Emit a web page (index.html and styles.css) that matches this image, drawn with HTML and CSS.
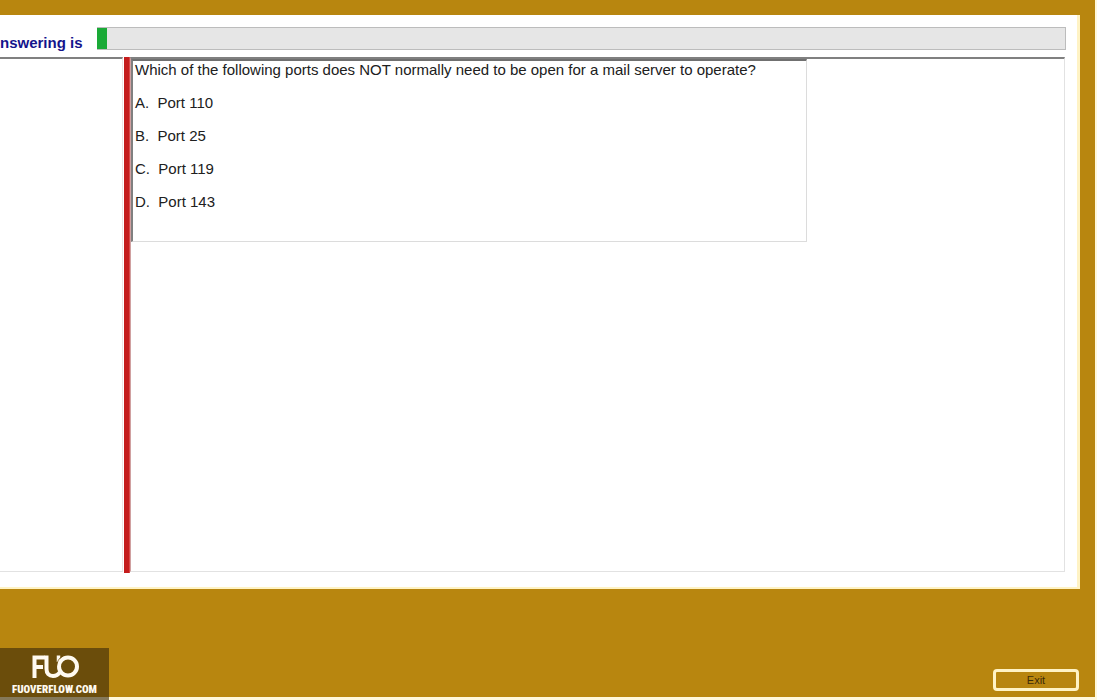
FILE: index.html
```html
<!DOCTYPE html>
<html lang="en">

<head>
    <meta charset="UTF-8">
    <meta name="viewport" content="width=device-width, initial-scale=1.0">
    <title>Practice Exam</title>
    <link rel="stylesheet" href="styles.css">
</head>

<body>
    <div class="window">
        <main class="exam">
            <div class="status">
                <label class="status-label" for="progress">nswering is</label>
                <progress class="progress" id="progress" value="1" max="100"></progress>
            </div>
            <div class="panes">
                <div class="side"></div>
                <div class="divider"></div>
                <div class="content">
                    <section class="question">
                        <p>Which of the following ports does NOT normally need to be open for a mail server to operate?</p>
                        <p>A.&nbsp; Port 110</p>
                        <p>B.&nbsp; Port 25</p>
                        <p>C.&nbsp; Port 119</p>
                        <p>D.&nbsp; Port 143</p>
                    </section>
                </div>
            </div>
        </main>
        <footer class="footer">
            <button type="button" class="exit">Exit</button>
        </footer>
    </div>

    <div class="watermark">
        <svg class="logo" width="48" height="24" viewBox="0 0 48 24" fill="none" stroke="#fffaf0" stroke-width="4">
            <path d="M3.500 23V2.500H14M3.500 12H12" />
            <path d="M15.500 0.500V14C15.500 18.500 18 21 22 21C25 21 27.500 19.500 29 17" />
            <path d="M27.500 0.500V7" stroke-width="3.500" />
            <circle cx="37" cy="11.500" r="9" />
            <path d="M25.500 13C25.500 7 28 3 32 1" stroke="#6b4d0b" stroke-width="0.800" />
        </svg>
        <span class="site">FUOVERFLOW.COM</span>
    </div>
</body>

</html>
```

FILE: styles.css
```css
* {
    box-sizing: border-box;
}

body {
    margin: 0;
    min-height: 100vh;
    display: flex;
    padding: 0 2px 3px 0;
    background-color: #fff8dc;
    font-family: "Liberation Sans", Arial, sans-serif;
}

.window {
    flex: 1;
    display: flex;
    flex-direction: column;
    padding: 15px 15px 0 0;
    background-color: #b8860f;
}

.exam {
    flex: 1;
    display: flex;
    flex-direction: column;
    padding: 12px 11px 15px 0;
    background-color: white;
    border-right: 3px solid #fff3c4;
    border-bottom: 2px solid #fff3c4;
}

.status {
    display: flex;
    height: 30px;
}

.status-label {
    width: 97px;
    padding-top: 8px;
    font-size: 15px;
    line-height: 16px;
    font-weight: bold;
    color: #14148c;
}

.progress {
    appearance: none;
    flex: 1;
    height: 23px;
    border: 1px solid #bcbcbc;
    border-left: 0;
}

.progress::-webkit-progress-bar {
    background-color: #e6e6e6;
}

.progress::-webkit-progress-value {
    background-color: #1aaa37;
}

/* panes */
.panes {
    flex: 1;
    display: flex;
    margin-right: 1px;
}

.side {
    width: 123px;
    margin-right: 1px;
    border-top: 2px solid #808080;
    border-right: 1px solid #f0e4e4;
    border-bottom: 1px solid #e2e2e2;
}

.divider {
    width: 6px;
    margin-bottom: -1px;
    background-color: #c41c1c;
    border-right: 1px solid #d84848;
}

.content {
    flex: 1;
    border: 1px solid #e2e2e2;
    border-top: 2px solid #808080;
    border-left-color: #d0a0a0;
}

.question {
    width: 676px;
    max-width: 100%;
    padding: 0 2px 31px;
    border: 1px solid #dcdcdc;
    border-top: 2px solid #707070;
    border-left: 2px solid #808080;
}

.question p {
    margin: 0 0 16px;
    font-size: 15px;
    line-height: 17px;
    color: #202020;
}

.question p:last-child {
    margin-bottom: 0;
}

/* footer */
.footer {
    display: flex;
    justify-content: flex-end;
    height: 108px;
    padding: 80px 1px 0 0;
}

.exit {
    width: 86px;
    height: 22px;
    padding: 0;
    border: 3px solid #fff3c4;
    border-radius: 4px;
    background-color: #b8860f;
    color: #3c2c08;
    font-family: "Liberation Sans", Arial, sans-serif;
    font-size: 11px;
    line-height: 16px;
}

.watermark {
    position: fixed;
    left: 0;
    bottom: 0;
    display: flex;
    flex-direction: column;
    align-items: center;
    width: 109px;
    height: 52px;
    padding-top: 7px;
    background-color: #6b4d0b;
    border-bottom: 3px solid #85795a;
}

.site {
    margin-top: 4px;
    font-family: Impact, "Roboto Condensed", sans-serif;
    font-size: 11px;
    line-height: 14px;
    font-weight: 900;
    color: #fffaf0;
}
```
